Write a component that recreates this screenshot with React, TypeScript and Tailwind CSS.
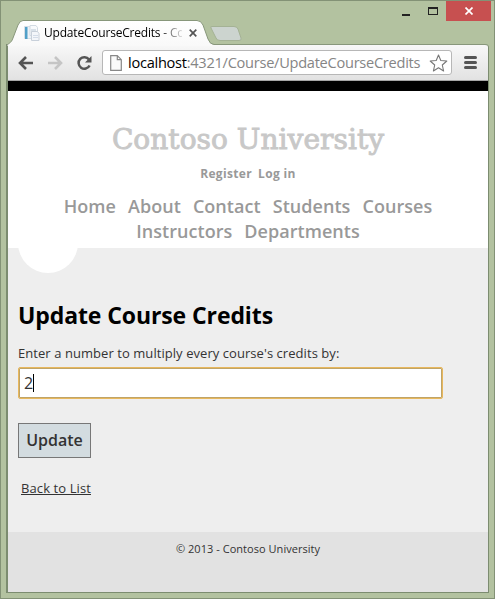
import React from "react";

function TitleBar() {
  return (
    <div className="relative flex h-[43px] shrink-0 items-start justify-between">
      <svg className="absolute left-0 top-[17px] z-10" width="245" height="28" viewBox="0 0 245 28" fill="none">
        <defs>
          <linearGradient id="tab" x1="0" y1="0" x2="0" y2="1">
            <stop offset="0" stopColor="#ffffff" />
            <stop offset="1" stopColor="#f9f9f9" />
          </linearGradient>
        </defs>
        <path d="M1.500 27C2 25 5 26 7 20L12 7Q14 2.500 17 2.500H191Q195 2.500 197 7L202 21Q204 26.500 208 26.500V28H1.500Z" fill="url(#tab)" />
        <path d="M1.500 27C2 25 5 26 7 20L12 7Q14 2.500 17 2.500H191Q195 2.500 197 7L202 21Q204 26.500 208 26.500" stroke="#88977b" />
        <path d="M206 8.500H228Q231 8.500 232 11L235 20Q236 22.500 233 22.500H214Q211 22.500 210 20L205 10Q204 8.500 206 8.500Z" fill="#ccd4cf" stroke="#a4b295" />
      </svg>
      <div className="relative z-20 ml-[18px] mt-[22px] flex h-[20px] items-center">
        <svg width="16" height="16" viewBox="0 0 16 16" className="shrink-0">
          <path d="M.5 1.500h12v12H.5Z" fill="#edf2f7" stroke="#d6dee6" />
          <path d="M1 2h2.500v12H1Z" fill="#51a0c8" />
          <path d="M6 .5h6l1.500 2v8H6Z" fill="#f8fafc" stroke="#d2dae2" />
          <path d="M7 5h5M7 7h4" stroke="#b8c7d5" />
          <path d="M7.500 6.500h6l1.500 2v7H7.500Z" fill="#f3f6fa" stroke="#c8d0da" />
          <path d="M9 10.500h5M9 12.500h5" stroke="#d3dce8" />
        </svg>
        <span className="ml-1 w-[138px] whitespace-nowrap bg-linear-to-r from-black from-[83%] to-[#0002] bg-clip-text font-['Open_Sans',sans-serif] text-[12px] leading-[18px] tracking-[-0.2px] text-transparent">
          UpdateCourseCredits - Co
        </span>
        <svg width="8" height="8" viewBox="0 0 8 8" className="ml-[7px]" stroke="#555" strokeWidth="1.700">
          <path d="M.7.7l6.600 6.600M7.300.7L.7 7.300" />
        </svg>
      </div>
      <div className="-mr-[2px] flex h-[20px]">
        <div className="flex w-[84px] items-center">
          <div className="ml-[40px] mt-[7px] h-[2px] w-[8px] bg-[#222]" />
          <div className="ml-[18px] h-[8px] w-[10px] border border-t-2 border-[#222]" />
        </div>
        <div className="flex w-[45px] items-center justify-center bg-[#c75050]">
          <svg width="8" height="8" viewBox="0 0 8 8" stroke="white" strokeWidth="1.700">
            <path d="M.5.5l7 7M7.500.5l-7 7" />
          </svg>
        </div>
      </div>
    </div>
  );
}

function Toolbar() {
  return (
    <div className="flex h-[37px] shrink-0 items-center rounded-tr-[3px] border-b border-t border-b-[#a6a6a6] border-t-[#88977b] bg-linear-to-b from-[#f8f8f8] to-[#e2e2e2]">
      <svg className="ml-[10px] shrink-0" width="16" height="14" viewBox="0 0 16 14" fill="none" stroke="#555" strokeWidth="2.600">
        <path d="M15 7H2M8 1L2 7l6 6" />
      </svg>
      <svg className="ml-[13px] shrink-0" width="16" height="14" viewBox="0 0 16 14" fill="none" stroke="#c5c5c5" strokeWidth="2.600">
        <path d="M1 7h13M8 1l6 6-6 6" />
      </svg>
      <svg className="ml-[13px] shrink-0" width="16" height="16" viewBox="0 0 16 16" fill="none">
        <path d="M13 4.400A5.800 5.800 0 1 0 13.600 10.500" stroke="#555" strokeWidth="2.500" />
        <path d="M15.500 1v6.500H9Z" fill="#555" />
      </svg>
      <div className="ml-[10px] flex h-[25px] w-[350px] shrink-0 items-center rounded-[3px] border border-[#b7b7b7] bg-white">
        <svg className="ml-[7px] shrink-0" width="12" height="16" viewBox="0 0 12 16" fill="#fafafa" stroke="#888" strokeWidth="1.200">
          <path d="M.7.7h6.600l4 4v10.600H.7ZM7.300.7v4h4" />
        </svg>
        <span className="ml-[6px] w-[294px] whitespace-nowrap pb-[2px] font-['Open_Sans',sans-serif] text-[14.600px] leading-[22px] tracking-[-0.27px] text-[#858585]">
          <span className="text-black">localhost</span>:4321/Course/UpdateCourseCredits
        </span>
        <svg className="ml-[7px] shrink-0" width="19" height="18" viewBox="0 0 19 18" fill="white" stroke="#777" strokeWidth="1.100">
          <path d="M9.500 1l2.300 5.500 6 .5-4.500 4 1.300 6-5.100-3.200L4.400 17l1.300-6L1.200 7l6-.5Z" strokeLinejoin="round" />
        </svg>
      </div>
      <div className="ml-[12px] flex w-[13px] shrink-0 flex-col gap-[2px]">
        <i className="h-[3px] rounded-full bg-[#555]" />
        <i className="h-[3px] rounded-full bg-[#555]" />
        <i className="h-[3px] rounded-full bg-[#555]" />
      </div>
    </div>
  );
}

export default function App() {
  return (
    <div className="flex h-[599px] w-[495px] flex-col overflow-hidden border border-[#839276] bg-[#b3c2a0] pl-[5px] pr-[5px]">
      <TitleBar />
      <div className="relative mb-[5px] flex min-h-0 flex-1 flex-col rounded-tr-[4px] border border-l-2 border-t-0 border-[#7c8c70] font-['Open_Sans',sans-serif] text-[#333]">
        <Toolbar />
        <div className="h-[10px] shrink-0 bg-black" />
        <header className="relative flex h-[157px] shrink-0 flex-col items-center bg-white font-semibold text-[#999]">
          <h1 className="mt-[30px] whitespace-nowrap font-['DejaVu_Serif',serif] text-[28px] font-normal leading-[38px] tracking-[0.05px] text-[#c8c8c8] [-webkit-text-stroke:0.9px_#c8c8c8]">
            Contoso University
          </h1>
          <div className="mt-[6px] flex gap-[6px] text-[12px] font-bold leading-[18px] tracking-[0.35px]">
            <span>Register</span>
            <span>Log in</span>
          </div>
          <nav className="mt-[11px] flex flex-wrap justify-center gap-x-[12px] px-[40px] text-[18px] leading-[25px] tracking-[0.05px]">
            <a>Home</a>
            <a>About</a>
            <a>Contact</a>
            <a>Students</a>
            <a>Courses</a>
            <a>Instructors</a>
            <a>Departments</a>
          </nav>
          <div className="absolute left-[10px] top-[122px] -z-0 h-[60px] w-[60px] rounded-full bg-white" />
        </header>
        <main className="flex h-[284px] shrink-0 flex-col items-start bg-[#eee] pl-[10px]">
          <h2 className="mt-[50px] whitespace-nowrap text-[23px] font-bold leading-[34px] tracking-[-0.1px] text-black">Update Course Credits</h2>
          <p className="mt-[11px] whitespace-nowrap text-[13px] leading-[20px] tracking-[0.06px]">Enter a number to multiply every course's credits by:</p>
          <div className="mt-[4px] flex h-[32px] w-[425px] items-center rounded-[2px] border border-[#e8b75c] bg-white pl-[5px] text-[16px] shadow-[inset_0_0_0_1px_#bfa468]">
            <span>2</span>
            <i className="h-[18px] w-px bg-black" />
          </div>
          <button className="mt-[24px] h-[35px] w-[73px] border border-[#777] bg-[#d3dce0] pb-[2px] text-[16px] font-semibold">Update</button>
          <a className="ml-[3px] mt-[20px] whitespace-nowrap text-[13px] leading-[20px] tracking-[0.1px] underline">Back to List</a>
        </main>
        <footer className="flex-1 bg-[#e2e2e2] pt-[9px] text-center text-[11px] leading-[16px] tracking-[0.04px]">© 2013 - Contoso University</footer>
      </div>
    </div>
  );
}
